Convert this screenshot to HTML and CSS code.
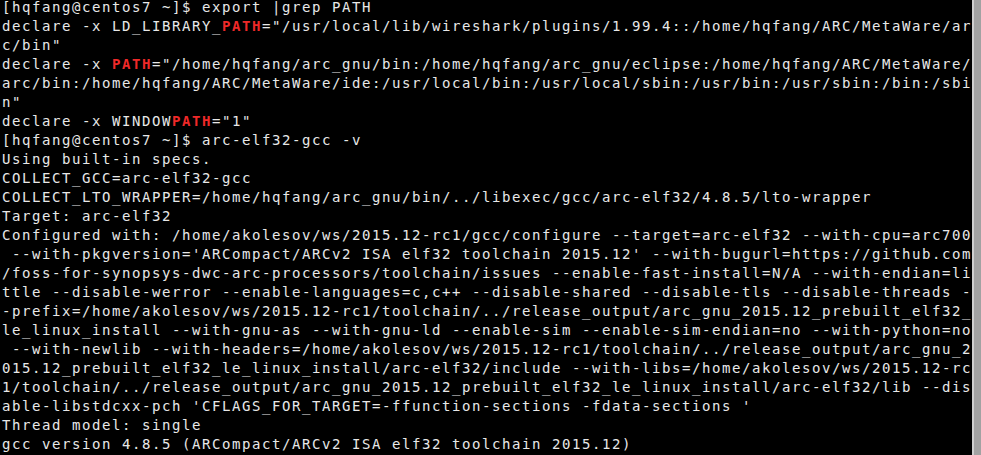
FILE: index.html
```html
<!DOCTYPE html>
<html>
<head>
<meta charset="utf-8">
<link rel="stylesheet" href="styles.css">
</head>
<body>
<div class="window">
<div class="term">
<div class="line">[hqfang@centos7 ~]$ export |grep PATH</div>
<div class="line">declare -x LD_LIBRARY_<b class="hl">PATH</b>="/usr/local/lib/wireshark/plugins/1.99.4::/home/hqfang/ARC/MetaWare/ar</div>
<div class="line">c/bin"</div>
<div class="line">declare -x <b class="hl">PATH</b>="/home/hqfang/arc_gnu/bin:/home/hqfang/arc_gnu/eclipse:/home/hqfang/ARC/MetaWare/</div>
<div class="line">arc/bin:/home/hqfang/ARC/MetaWare/ide:/usr/local/bin:/usr/local/sbin:/usr/bin:/usr/sbin:/bin:/sbi</div>
<div class="line">n"</div>
<div class="line">declare -x WINDOW<b class="hl">PATH</b>="1"</div>
<div class="line">[hqfang@centos7 ~]$ arc-elf32-gcc -v</div>
<div class="line">Using built-in specs.</div>
<div class="line">COLLECT_GCC=arc-elf32-gcc</div>
<div class="line">COLLECT_LTO_WRAPPER=/home/hqfang/arc_gnu/bin/../libexec/gcc/arc-elf32/4.8.5/lto-wrapper</div>
<div class="line">Target: arc-elf32</div>
<div class="line">Configured with: /home/akolesov/ws/2015.12-rc1/gcc/configure --target=arc-elf32 --with-cpu=arc700</div>
<div class="line"> --with-pkgversion='ARCompact/ARCv2 ISA elf32 toolchain 2015.12' --with-bugurl=https://github.com</div>
<div class="line">/foss-for-synopsys-dwc-arc-processors/toolchain/issues --enable-fast-install=N/A --with-endian=li</div>
<div class="line">ttle --disable-werror --enable-languages=c,c++ --disable-shared --disable-tls --disable-threads -</div>
<div class="line">-prefix=/home/akolesov/ws/2015.12-rc1/toolchain/../release_output/arc_gnu_2015.12_prebuilt_elf32_</div>
<div class="line">le_linux_install --with-gnu-as --with-gnu-ld --enable-sim --enable-sim-endian=no --with-python=no</div>
<div class="line"> --with-newlib --with-headers=/home/akolesov/ws/2015.12-rc1/toolchain/../release_output/arc_gnu_2</div>
<div class="line">015.12_prebuilt_elf32_le_linux_install/arc-elf32/include --with-libs=/home/akolesov/ws/2015.12-rc</div>
<div class="line">1/toolchain/../release_output/arc_gnu_2015.12_prebuilt_elf32_le_linux_install/arc-elf32/lib --dis</div>
<div class="line">able-libstdcxx-pch 'CFLAGS_FOR_TARGET=-ffunction-sections -fdata-sections '</div>
<div class="line">Thread model: single</div>
<div class="line">gcc version 4.8.5 (ARCompact/ARCv2 ISA elf32 toolchain 2015.12)</div>
</div>
<div class="scrollbar"><div class="scroll-edge"></div><div class="scroll-thumb"></div></div>
</div>
</body>
</html>
```
FILE: styles.css
```css
html, body {
  margin: 0;
  padding: 0;
  background: #000;
  height: 100%;
  overflow: hidden;
}
.window {
  display: flex;
  width: 981px;
  height: 455px;
  background: #000;
}
.term {
  flex: 1;
  padding: 0 0 0 2px;
  margin-top: -2px;
  font-family: "DejaVu Sans Mono", monospace;
  font-size: 14px;
  letter-spacing: 1.57px;
  line-height: 19px;
  color: #e8e8e8;
  overflow: hidden;
}
.line {
  white-space: pre;
  height: 19px;
}
.hl {
  color: #ef2929;
  font-weight: bold;
}
.scrollbar {
  width: 9px;
  display: flex;
}
.scroll-edge {
  width: 2px;
  background: #cfcfcf;
}
.scroll-thumb {
  flex: 1;
  background: #a2a2a2;
}
```
